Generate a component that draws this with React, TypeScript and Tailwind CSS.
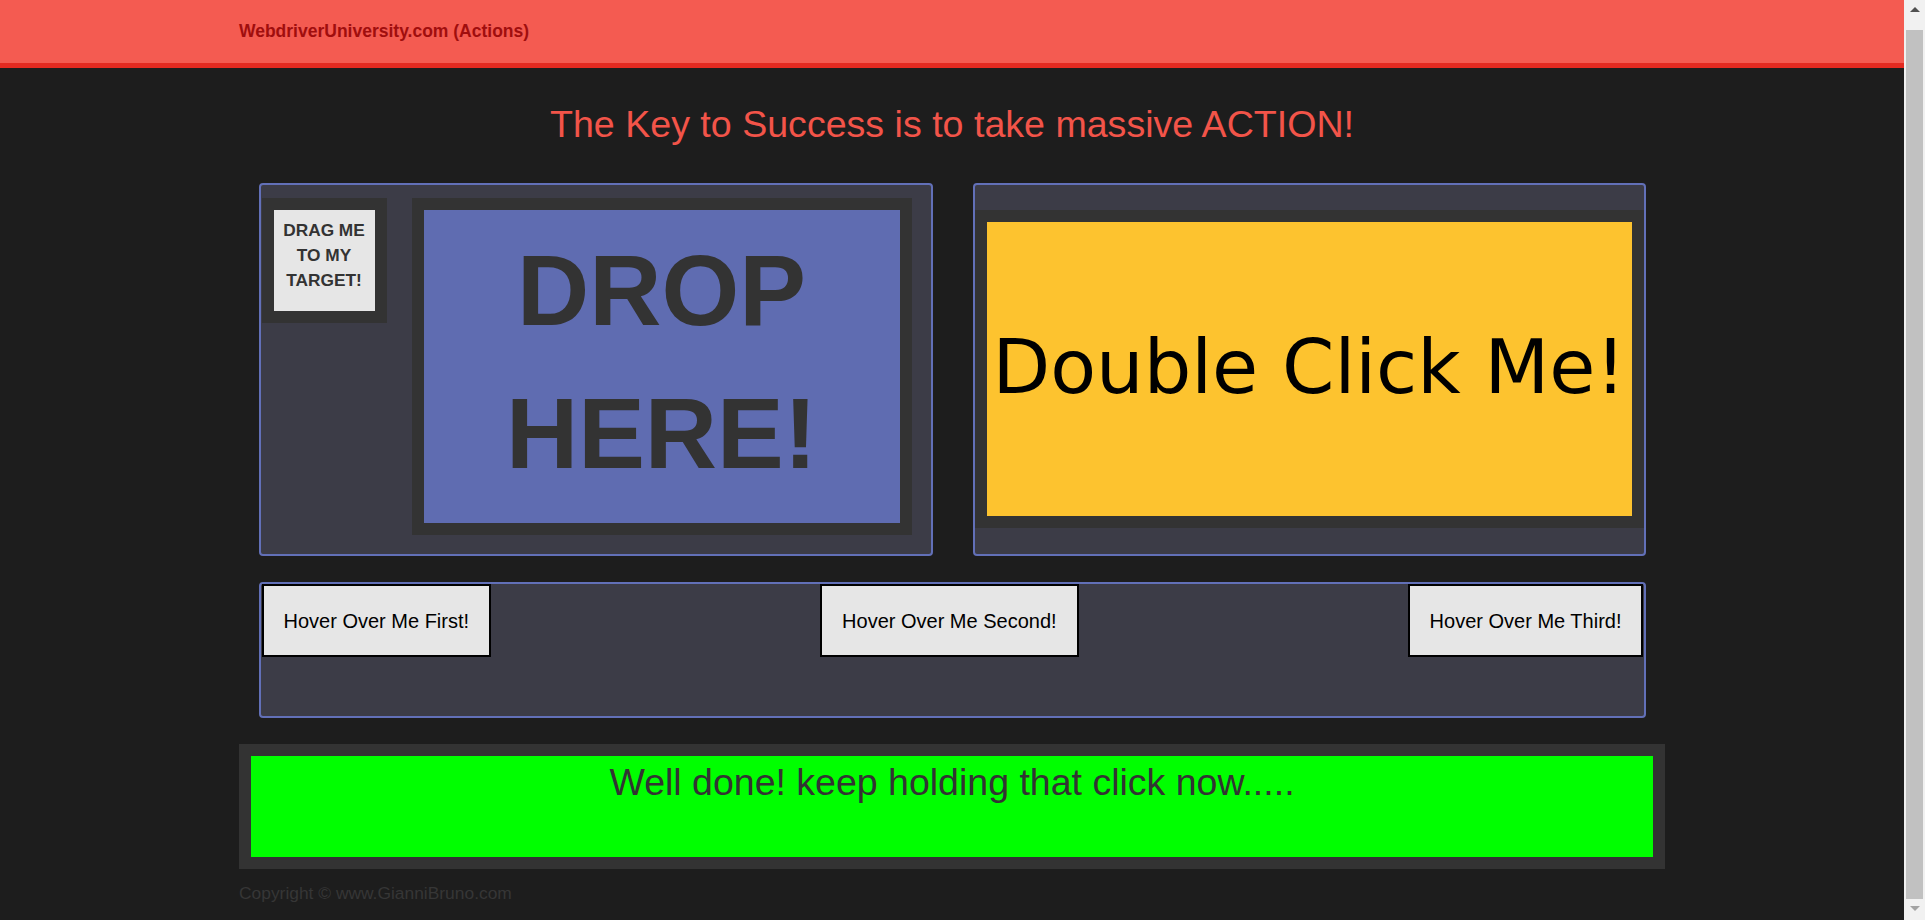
import React from "react";

const sans = { fontFamily: '"Liberation Sans", Arial, sans-serif' };

function HoverButton({ label }: { label: string }) {
  return (
    <div className="h-[73px] flex items-center px-[20px] border-2 border-black bg-[#e6e6e6] text-[20px] text-black whitespace-nowrap">
      {label}
    </div>
  );
}

function Scrollbar() {
  return (
    <div className="w-[21px] h-full bg-[#f1f1f1] flex flex-col items-center shrink-0">
      <div className="h-[30px] w-full flex items-center justify-center">
        <div className="w-0 h-0 border-l-[5px] border-r-[5px] border-b-[5px] border-l-transparent border-r-transparent border-b-[#505050] -mt-[12px]" />
      </div>
      <div className="flex-1 w-[17px] bg-[#c1c1c1]" />
      <div className="h-[21px] w-full flex items-center justify-center">
        <div className="w-0 h-0 border-l-[5px] border-r-[5px] border-t-[5px] border-l-transparent border-r-transparent border-t-[#a3a3a3] -mt-[2px]" />
      </div>
    </div>
  );
}

export default function App() {
  return (
    <div className="w-full h-[920px] flex bg-[#1d1d1d] overflow-hidden" style={sans}>
      <div className="flex-1 flex flex-col min-w-0">
        {/* Navbar */}
        <div className="h-[68px] bg-[#f45b51] border-b-[5px] border-[#e42a21] shrink-0">
          <div className="w-[1426px] mx-auto h-full flex items-center">
            <span className="text-[17.5px] font-bold text-[#a00e0e]">WebdriverUniversity.com (Actions)</span>
          </div>
        </div>

        {/* Title */}
        <div className="pt-[38px] text-center text-[37.6px] leading-[37px] text-[#f25449]">
          The Key to Success is to take massive ACTION!
        </div>

        {/* Panels */}
        <div className="w-[1387px] mx-auto mt-[40px] flex flex-col">
          <div className="flex gap-[40px]">
            {/* Drag & drop panel */}
            <div className="w-[674px] h-[373px] border-2 border-[#6270b8] rounded-[4px] bg-[#3c3c47] flex items-start">
              <div className="ml-[1px] mt-[13px] w-[125px] h-[125px] border-[12px] border-[#333333] bg-[#e6e6e6] flex flex-col items-center pt-[8px] text-[17.3px] leading-[25px] font-bold text-[#333333] text-center">
                <span>DRAG ME</span>
                <span>TO MY</span>
                <span>TARGET!</span>
              </div>
              <div className="ml-[25px] mt-[13px] w-[500px] h-[337px] border-[12px] border-[#333333] bg-[#5f6cb1] flex flex-col items-center pt-[9px] text-[100px] leading-[142.86px] font-bold text-[#333333]">
                <span>DROP</span>
                <span>HERE!</span>
              </div>
            </div>

            {/* Double click panel */}
            <div className="w-[673px] h-[373px] border-2 border-[#6270b8] rounded-[4px] bg-[#3c3c47] pt-[25px]">
              <div className="h-[318px] bg-[#333333] p-[12px]">
                <div
                  className="w-full h-full bg-[#fdc32f] flex items-center justify-center pb-[4px] text-[75px] leading-[75px] text-black whitespace-nowrap"
                  style={{ fontFamily: '"DejaVu Sans", Verdana, sans-serif' }}
                >
                  Double Click Me!
                </div>
              </div>
            </div>
          </div>

          {/* Hover panel */}
          <div className="mt-[26px] h-[136px] border-2 border-[#6270b8] rounded-[4px] bg-[#3c3c47] flex justify-between items-start pl-[1px]">
            <HoverButton label="Hover Over Me First!" />
            <HoverButton label="Hover Over Me Second!" />
            <HoverButton label="Hover Over Me Third!" />
          </div>
        </div>

        {/* Click and hold */}
        <div className="w-[1426px] mx-auto mt-[26px]">
          <div className="h-[125px] border-[12px] border-[#333333] bg-[#00ff00] pt-[6px] text-center text-[37.5px] leading-[40px] text-[#333333]">
            Well done! keep holding that click now.....
          </div>
          <div className="mt-[14px] text-[17.4px] leading-[21px] text-[#363636]">
            Copyright © www.GianniBruno.com
          </div>
        </div>
      </div>
      <Scrollbar />
    </div>
  );
}
